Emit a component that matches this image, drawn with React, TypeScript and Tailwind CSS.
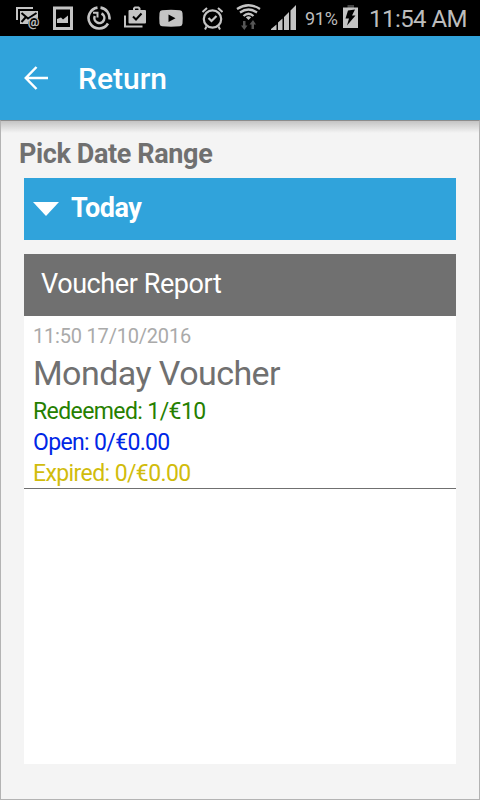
import type { ReactNode } from 'react';

const vouchers = [
  {
    time: '11:50 17/10/2016',
    name: 'Monday Voucher',
    redeemed: '1/€10',
    open: '0/€0.00',
    expired: '0/€0.00',
  },
];

function StatusIcon({ width, className, children }: { width: number; className: string; children: ReactNode }) {
  return (
    <svg width={width} height="36" viewBox={`0 0 ${width} 36`} fill="none" stroke="#c4c4c4" className={`shrink-0 ${className}`}>
      {children}
    </svg>
  );
}

function StatusBar() {
  return (
    <div className="flex h-9 shrink-0 bg-black pl-4 text-[#bdbdbd]">
      <StatusIcon width={24} className="">
        <path d="M1 20V8H17" strokeWidth="2" />
        <path d="M4 11H22V18C17 17 12.500 19 12 24H4Z" fill="#c4c4c4" stroke="none" />
        <path d="M5.500 13L12 18.500L20.500 13M5.500 22L9.500 17.500M14.500 17L16.500 18.500" stroke="#000" strokeWidth="2" />
        <text x="11.800" y="26.300" fontSize="13" fill="#c4c4c4" strokeWidth="0.300" fontFamily="Roboto, sans-serif">@</text>
      </StatusIcon>
      <StatusIcon width={20} className="ml-[13px]">
        <rect x="1.500" y="8" width="17" height="20.500" strokeWidth="3" />
        <path d="M4 23V19L8 17.500L10 19.500L15 15.500V23Z" fill="#c4c4c4" stroke="none" />
      </StatusIcon>
      <StatusIcon width={25} className="ml-[14px]">
        <path d="M13.500 7.600A10.500 10.500 0 0 1 22.400 19.500M21 23.500A10.500 10.500 0 1 1 10.500 7.600" strokeWidth="2.600" />
        <path d="M14.500 13.500A5 5 0 1 1 7.800 16" strokeWidth="2.500" />
        <path d="M6 12.800H10.500V17.500" strokeWidth="2" />
      </StatusIcon>
      <StatusIcon width={23} className="ml-3">
        <path d="M1 15.500V26.500H18.500" strokeWidth="2" />
        <path d="M10 11V8.500L11 7.500H14.500L15.500 8.500V11" strokeWidth="2" />
        <rect x="4.500" y="10" width="17.500" height="13.500" rx="1" fill="#c4c4c4" stroke="none" />
        <path d="M9 16.500L12 19.500L17.500 13.500" stroke="#000" strokeWidth="2" />
      </StatusIcon>
      <StatusIcon width={24} className="ml-3">
        <path d="M3 10.200Q12 9.200 21 10.200Q23.300 10.500 23.500 13Q24 18.500 23.500 23.500Q23.300 26 21 26.300Q12 27 3 26.300Q.700 26 .500 23.500Q0 18.500 .500 13Q.700 10.500 3 10.200Z" fill="#c4c4c4" stroke="none" />
        <path d="M9.500 14.500V22L16.500 18.200Z" fill="#000" stroke="none" />
      </StatusIcon>
      <StatusIcon width={22} className="ml-[18px]">
        <circle cx="11.500" cy="19" r="8.700" strokeWidth="2.200" />
        <path d="M1.500 12L6 8M21.500 12L17 8M5.500 26.500L4 29.500M17.500 26.500L19 29.500" strokeWidth="2" />
        <path d="M7.500 18L10.500 21L15.500 16" strokeWidth="2.200" />
      </StatusIcon>
      <StatusIcon width={26} className="ml-[13px]">
        <path d="M1 9Q12.500 1.500 24 9M4 12.500Q12.500 6.500 21 12.500M7.500 16Q12.500 11.500 17.500 16" strokeWidth="2.300" />
        <path d="M9.800 17.300L12.500 20L15.200 17.300Q12.500 15 9.800 17.300Z" fill="#c4c4c4" stroke="none" />
        <path d="M7 21H9.500V25.500H11.500L8.300 30L5 25.500H7ZM15.500 29V24.500H13.500L17 20L20 24.500H18V29Z" fill="#555" stroke="none" />
      </StatusIcon>
      <StatusIcon width={26} className="ml-[9px]">
        <path d="M0 30V29L5.500 24.500V30ZM7 30V22.500L11.500 18.500V30ZM13 30V17L18 12V30ZM19.500 30V10.500L25 5V30Z" fill="#c4c4c4" stroke="none" />
      </StatusIcon>
      <span className="ml-2 w-[38px] pt-px text-[18px] leading-9 tracking-[-0.3px]">91%</span>
      <StatusIcon width={15} className="">
        <path d="M4.500 5H11V8H4.500Z" fill="#444" stroke="none" />
        <path d="M0 7.500H15V28H0Z" fill="#c4c4c4" stroke="none" />
        <path d="M5 10.500L12 9.500L9 15.500H12.500L4 25.500L6 18.500H2.500Z" fill="#000" stroke="none" />
      </StatusIcon>
      <span className="ml-[11px] whitespace-nowrap pt-px text-[24px] leading-9 tracking-[-0.55px]">11:54 AM</span>
    </div>
  );
}

export default function App() {
  return (
    <div className="flex h-[800px] w-[480px] flex-col overflow-hidden bg-[#f4f4f4] font-['Roboto',sans-serif]">
      <StatusBar />
      <header className="flex h-[84px] shrink-0 items-center bg-[#30a3db] pl-6 text-white">
        <svg width="24" height="24" viewBox="0 0 24 24" fill="none" stroke="currentColor" strokeWidth="2.500">
          <path d="M24 12H2M12.500 1L1.800 12L12.500 23" />
        </svg>
        <h1 className="ml-[30px] pt-0.5 text-[30px] font-medium leading-9">Return</h1>
      </header>

      <main className="flex flex-1 flex-col border border-[#b3b3b3] border-t-[#8c8c8c]">
        <div className="h-3 shrink-0 bg-linear-to-b from-[#c4c4c4] to-[#f4f4f4]" />
        <h2 className="ml-[18px] mt-[5px] h-8 text-[27px] font-bold leading-8 tracking-[-0.38px] text-[#707070]">Pick Date Range</h2>
        <button className="mx-[23px] mt-2 flex h-[62px] shrink-0 items-center bg-[#30a3db] pl-[9px] text-white">
          <svg width="26" height="14" viewBox="0 0 26 14" fill="currentColor">
            <path d="M0 0H26L13 14Z" />
          </svg>
          <span className="ml-3 pb-0.5 text-[27px] font-bold leading-8 tracking-[-0.5px]">Today</span>
        </button>

        <section className="mx-[23px] mb-[35px] mt-[14px] flex-1 bg-white">
          <h3 className="h-[62px] bg-[#707070] pl-[17px] text-[27px] leading-[60px] tracking-[-0.42px] text-white">Voucher Report</h3>
          {vouchers.map((voucher) => (
            <article key={voucher.time} className="h-[173px] border-b border-[#707070] pl-[9px]">
              <p className="pt-1 text-[20px] leading-8 tracking-[-0.2px] text-[#aaa]">{voucher.time}</p>
              <h4 className="mb-px text-[34px] leading-[43px] tracking-[-0.56px] text-[#707070]">{voucher.name}</h4>
              <p className="text-[23px] leading-[31px] tracking-[-0.6px] text-[#267f00]">Redeemed: {voucher.redeemed}</p>
              <p className="text-[23px] leading-[31px] tracking-[-0.65px] text-[#0026e6]">Open: {voucher.open}</p>
              <p className="text-[23px] leading-[31px] tracking-[-0.6px] text-[#d1bc0c]">Expired: {voucher.expired}</p>
            </article>
          ))}
        </section>
      </main>
    </div>
  );
}
